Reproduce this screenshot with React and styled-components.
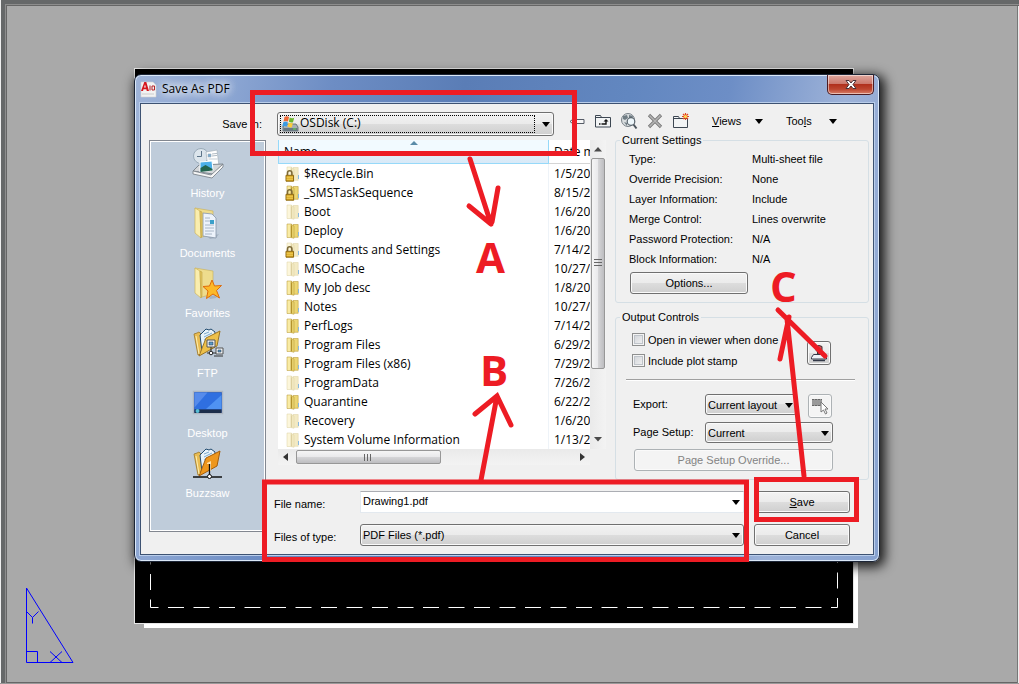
import React, { useState } from 'react'
import styled, { createGlobalStyle, css } from 'styled-components'

const GlobalStyle = createGlobalStyle`
  * {
    box-sizing: border-box;
  }
  body {
    margin: 0;
    background: #a9a9a9;
    color: #000;
    font: 11px/14px 'Liberation Sans', Arial, sans-serif;
  }
  button,
  input,
  select {
    margin: 0;
    font: inherit;
    color: inherit;
  }
`

const RED = '#ed1c24'

const Canvas = styled.main`
  position: relative;
  min-height: 100vh;
  padding: 74px 139px 60px 134px;
  overflow: hidden;
  background: linear-gradient(#000, #000) 114px 100% / 61px 1px no-repeat, #a9a9a9;
  border-bottom: 1px solid #999;
  box-shadow: inset 1px 0 #eee, inset 5px 4px #666869, inset 6px 5px #8d8d8d,
    inset 7px 6px #666, inset -1px 0 #eee, inset -2px 0 #777, inset 0 -1px #666;
`

const Sheet = styled.div`
  position: absolute;
  top: 69px;
  right: 166px;
  bottom: 60px;
  left: 135px;
  background: #000;
  box-shadow: 0 0 0 1px #e6e6e6, 7px 7px 0 -2px #fff;
`

const PlotMargin = styled.svg`
  position: absolute;
  left: 15px;
  bottom: 15px;
  width: calc(100% - 30px);
  height: 60px;
  overflow: visible;
`

const UcsIcon = styled.svg`
  position: absolute;
  left: 25px;
  bottom: 19px;
  width: 50px;
  height: 78px;
`

const Dialog = styled.section`
  position: relative;
  padding: 0 5px 6px;
  border: 1px solid #1c2536;
  border-radius: 7px;
  background: linear-gradient(100deg, #9fb4d8 0%, #8ba5d2 12%, #6d8dc4 24%, #5a7db6 40%, #6287c0 60%, #6d8ec6 72%, #9db2d8 86%, #87a2d0 100%);
  box-shadow: inset 0 0 0 1px #dbe8f7, 3px 3px 12px 2px rgba(0, 0, 0, 0.85);
`

const TitleBar = styled.header`
  display: flex;
  align-items: center;
  height: 28px;
  gap: 5px;
`

const Title = styled.h1`
  flex: 1;
  margin: 0;
  font: 12px/16px 'Open Sans', sans-serif;
  text-shadow: 0 0 8px #fff, 0 0 8px #fff, 0 0 12px #fff;
`

const CloseButton = styled.button`
  align-self: flex-start;
  display: flex;
  align-items: center;
  justify-content: center;
  width: 47px;
  height: 20px;
  padding: 0;
  border: 1px solid #4c1c22;
  border-top: 0;
  border-radius: 0 0 5px 5px;
  background: linear-gradient(#dfa79e, #cc7a6e 45%, #b0301d 50%, #bd4630 75%, #d98069);
  box-shadow: inset 0 0 0 1px rgba(255, 255, 255, 0.5);
`

const Client = styled.div`
  padding: 8px 4px 8px 8px;
  border: 1px solid #3d5272;
  background: #f0f0f0;
  box-shadow: 0 0 0 1px #b9cdea;
`

const LocationRow = styled.div`
  display: flex;
  align-items: center;
  margin-bottom: 4px;
`

const LocationLabel = styled.label`
  width: 128px;
  padding-right: 15px;
  text-align: right;
`

const raised = css`
  border: 1px solid #707070;
  border-radius: 3px;
  background: linear-gradient(#f2f2f2, #ebebeb 49%, #dddddd 50%, #cfcfcf);
  box-shadow: inset 0 0 0 1px #fafafa;
`

const Combo = styled.span`
  position: relative;
  display: flex;
  flex: ${props => (props.$width ? 'none' : 1)};
  width: ${props => (props.$width ? `${props.$width}px` : 'auto')};
  height: ${props => props.$height || 21}px;
  &::after {
    content: '';
    position: absolute;
    top: 50%;
    right: 4px;
    margin-top: -2px;
    border: 4px solid transparent;
    border-top: 5px solid #000;
    border-bottom: 0;
    pointer-events: none;
  }
`

const Select = styled.select`
  width: 100%;
  padding: 0 18px 0 2px;
  appearance: none;
  ${raised}
`

const DriveSelect = styled(Select)`
  padding-left: 22px;
  padding-bottom: 2px;
  font: 12px/16px 'Open Sans', sans-serif;
`

// focus rectangle and drive picture drawn over the select
const DriveFocus = styled.span`
  position: absolute;
  top: 3px;
  right: 19px;
  bottom: 3px;
  left: 3px;
  border: 1px dotted #000;
  pointer-events: none;
  svg {
    display: block;
  }
`

const Toolbar = styled.div`
  display: flex;
  align-items: center;
  flex: none;
  width: 315px;
  padding: 0 0 6px 15px;
  gap: 10px;
`

const ToolButton = styled.button`
  display: flex;
  width: 16px;
  height: 16px;
  padding: 0;
  border: 0;
  background: none;
  svg {
    flex: none;
  }
`

const MenuButton = styled.button`
  display: flex;
  align-items: center;
  justify-content: space-between;
  width: 51px;
  margin-left: 13px;
  padding: 0;
  border: 0;
  background: none;
  &::after {
    content: '';
    border: 4px solid transparent;
    border-top: 5px solid #000;
    border-bottom: 0;
  }
`

const Content = styled.div`
  display: flex;
  gap: 8px;
`

const Places = styled.nav`
  flex: none;
  width: 117px;
  margin-bottom: 14px;
  padding-top: 6px;
  border: 1px solid #828790;
  background: #bfccda;
  box-shadow: inset 0 0 0 1px #fff;
`

const Place = styled.button`
  display: flex;
  flex-direction: column;
  align-items: center;
  gap: 7px;
  width: 100%;
  height: 60px;
  padding: 0;
  border: 0;
  background: none;
  color: #fff;
`

const MainColumn = styled.div`
  flex: 1;
  min-width: 0;
`

const Upper = styled.div`
  display: flex;
  gap: 9px;
  padding-left: 4px;
`

const Browser = styled.div`
  flex: 1;
  min-width: 0;
  display: grid;
  grid-template-columns: minmax(0, 1fr) 16px;
  grid-template-rows: 309px 16px;
  align-content: start;
  background: #f0f0f0;
`

const FileTable = styled.table`
  width: 100%;
  table-layout: fixed;
  border-spacing: 0;
  background: #fff;
  font: 12px/19px 'Open Sans', sans-serif;
  td,
  th {
    padding: 0 0 0 5px;
    overflow: hidden;
    white-space: nowrap;
    text-align: left;
    font-weight: normal;
  }
  td:first-child {
    padding-left: 7px;
    border-right: 1px solid #eef3f8;
  }
`

const NameHeader = styled.th`
  position: relative;
  height: 24px;
  border: 1px solid #96d9f9;
  border-top: 0;
  background: linear-gradient(#f2faff, #f2faff 50%, #e4f1fa 51%, #d8e9f7);
  &::before {
    content: '';
    position: absolute;
    top: 1px;
    left: 50%;
    margin-left: -4px;
    border: 4px solid transparent;
    border-bottom: 4px solid #5b8ba8;
    border-top: 0;
  }
`

const DateHeader = styled.th`
  width: 41px;
  border-bottom: 1px solid #d5d5d5;
`

const FileName = styled.span`
  display: flex;
  align-items: center;
  gap: 3px;
`

const VScroll = styled.div`
  display: flex;
  flex-direction: column;
  align-items: center;
  padding: 7px 1px;
  background: linear-gradient(90deg, #eaeaea, #f3f3f3);
`

const HScroll = styled.div`
  display: flex;
  align-items: center;
  padding: 1px 5px;
  background: linear-gradient(#eaeaea, #f3f3f3);
`

const Thumb = styled.div`
  flex: none;
  display: flex;
  align-items: center;
  justify-content: center;
  width: ${props => (props.$vertical ? '14px' : '145px')};
  height: ${props => (props.$vertical ? '211px' : '14px')};
  margin: ${props => (props.$vertical ? '6px 0 auto' : '0 auto 0 8px')};
  border: 1px solid #979797;
  border-radius: 2px;
  background: linear-gradient(
    ${props => (props.$vertical ? '90deg' : '180deg')},
    #f5f5f5,
    #e9e9eb 49%,
    #d6d6d8 50%,
    #bdbdc0
  );
`

const Panel = styled.div`
  flex: none;
  width: 254px;
  margin-top: -7px;
`

const Group = styled.fieldset`
  min-width: 0;
  margin: 0 0 7px;
  padding: 0 0 8px;
  border: 1px solid #d5dfe5;
  border-radius: 3px;
  legend {
    margin-left: 4px;
    padding: 0 2px;
  }
`

const Settings = styled.dl`
  display: grid;
  grid-template-columns: 123px 1fr;
  margin: 2px 0 3px 13px;
  line-height: 20px;
  dd {
    margin: 0;
  }
`

const Button = styled.button`
  display: block;
  width: ${props => (props.$wide ? '199px' : '118px')};
  height: 22px;
  margin-left: ${props => (props.$wide ? '18px' : '14px')};
  padding: 0;
  ${raised}
  &:disabled {
    border-color: #adb2b5;
    background: #f4f4f4;
    color: #838383;
  }
`

const ActionButton = styled(Button)`
  width: 96px;
  margin: 0;
`

const SquareButton = styled.button`
  display: flex;
  align-items: center;
  justify-content: center;
  width: 24px;
  height: 24px;
  padding: 0;
  ${raised}
  &:disabled {
    border-color: #adb2b5;
    background: #f4f4f4;
  }
`

const Options = styled.div`
  display: flex;
  align-items: center;
  justify-content: space-between;
  margin: 5px 13px 7px 10px;
  padding: 0 24px 8px 6px;
  border-bottom: 1px solid #a0a0a0;
  box-shadow: 0 1px #fff;
  button {
    margin-top: 6px;
  }
`

const CheckLabel = styled.label`
  display: flex;
  align-items: center;
  gap: 3px;
  height: 21px;
`

const CheckBox = styled.input`
  appearance: none;
  width: 13px;
  height: 13px;
  border: 1px solid #8e8f8f;
  background: linear-gradient(135deg, #cdd0d5, #f6f6f6);
  box-shadow: inset 0 0 0 1px #f4f4f4, inset 0 0 0 2px #bfc4ca;
  &:checked {
    background: #4b6097;
  }
`

const ExportGrid = styled.div`
  display: grid;
  grid-template-columns: 72px 92px 35px;
  row-gap: 4px;
  margin: 14px 0 6px 17px;
  label {
    line-height: 21px;
  }
  > button {
    margin-left: 11px;
  }
`

const SetupRow = styled.div`
  display: flex;
  grid-column: 1 / -1;
  label {
    flex: none;
    width: 72px;
  }
`

const Footer = styled.div`
  display: grid;
  grid-template-columns: 86px 1fr 96px;
  align-items: center;
  row-gap: 11px;
  margin-top: 4px;
  padding-right: 19px;
  > label {
    padding-top: 4px;
  }
  > span {
    margin-right: 10px;
  }
`

const FileInput = styled.input`
  width: 100%;
  padding: 0 18px 2px 2px;
  border: 1px solid #e3e9ef;
  border-top-color: #abadb3;
  background: #fff;
`

const Markup = styled.svg`
  position: absolute;
  top: -1px;
  left: -1px;
  width: 746px;
  height: 490px;
  overflow: visible;
  pointer-events: none;
  fill: none;
  stroke: ${RED};
  stroke-width: 5px;
  stroke-linecap: round;
`

const Letter = styled.strong`
  position: absolute;
  left: ${props => props.$x}px;
  top: ${props => props.$y}px;
  color: ${RED};
  font: bold 42px/42px 'Open Sans', sans-serif;
  pointer-events: none;
`

const folderFill = { normal: ['#f9eba4', '#ecd673', '#b3932d'], faded: ['#fcf6db', '#f3eac4', '#ddd0a0'] }

function SmallFolder({ faded, locked }) {
  const [light, mid, dark] = folderFill[faded ? 'faded' : 'normal']
  return (
    <svg width="16" height="16" viewBox="0 0 16 16">
      <path d="M8 1.500h5.200v12.800H7z" fill={mid} stroke={dark} strokeWidth=".5" />
      <path d="M2 1h4.500v13.500H2z" fill={light} stroke={dark} strokeWidth=".5" />
      <path d="M6 1.500 9 3v12.300l-3-.8z" fill={mid} stroke={dark} strokeWidth=".5" />
      <path d="M6.500 2.500v11.600" stroke={dark} strokeWidth="1.200" />
      <path d="M13 9h1v4h-1z" fill="#8ab9e0" />
      {locked && (
        <g>
          <path d="M2.500 9.500V7a2.200 2.200 0 0 1 4.400 0v2.500" fill="none" stroke="#7d6a38" strokeWidth="1.600" />
          <path d="M1 9.300h7.500v5.900H1z" fill="#d9a51c" stroke="#8f6b14" />
          <path d="M1.500 11.200h6.500M1.500 13.200h6.500" stroke="#f8dd74" strokeWidth=".8" />
        </g>
      )}
    </svg>
  )
}

function OpenFolder({ orange, children }) {
  return (
    <svg width="32" height="32" viewBox="0 0 32 32">
      <path d="M2 7l3-1 2-1 3 3v19l-4 1z" fill="#e9bc53" stroke="#9b7526" strokeWidth=".8" />
      <path d="M8 8l6-6 3 1 2-1 4 3-1 11-12 9z" fill="#e8f3fa" stroke="#234c70" />
      <path d="M12 7l5-2M12 10l8-4M12 13l9-4" stroke="#7ba9cc" />
      <path d="M14 11l14-7-3 15L7 29z" fill={orange ? '#ee971d' : '#edc04a'} stroke={orange ? '#a45e0c' : '#9b7526'} />
      <path d="M4 9l3 18" stroke="#fff0b2" />
      {children}
    </svg>
  )
}

function PlainFolder({ children }) {
  return (
    <svg width="32" height="32" viewBox="0 0 32 32">
      <path d="M16 30l11-3-3 4-6 1z" fill="#8c9bab" opacity=".5" />
      <path d="M3 1l18 3v23l-11 3z" fill="#eedc8d" stroke="#c8ae55" strokeWidth=".6" />
      {children[0]}
      <path d="M3 1l5 3 1 27-6-5z" fill="#f9edae" stroke="#cfb45a" strokeWidth=".7" />
      <path d="M8 4l2 1v23l-1 3z" fill="#e3c864" stroke="#c2a23f" strokeWidth=".6" />
      {children[1]}
    </svg>
  )
}

const placeIcons = {
  History: (
    <svg width="32" height="32" viewBox="0 0 32 32">
      <circle cx="9" cy="9" r="7.500" fill="#dce5ec" stroke="#9aabb9" />
      <path d="M9.500 4v5.500H5" fill="none" stroke="#5d7489" />
      <path d="M14 5l11-2 2 16-11 2z" fill="#fff" stroke="#a5b1bb" strokeWidth=".7" />
      <path d="M16 7h3v3h-3zM16.500 12h9" fill="#79acd1" stroke="#9babb8" strokeWidth=".6" />
      <path d="M20 7l5-.6M20 9l5-.6" stroke="#8f9eaa" strokeWidth=".7" />
      <path d="M1 24l6-6 24-1-10 10z" fill="#d3d6d9" stroke="#7f8890" />
      <path d="M8 15l12-1 1 9-13 2z" fill="#4cb0ea" stroke="#fff" />
      <path d="M8.500 21l5-3 7 4v1.500L8.500 25z" fill="#24654f" />
      <path d="M1 24l18 4 12-11v3L20 31 1 27z" fill="#f6f6f6" stroke="#737b83" strokeWidth=".8" />
    </svg>
  ),
  Documents: (
    <PlainFolder>
      <g>
        <path d="M11 6l9 1 4 4v20l-13-2z" fill="#edf3fb" stroke="#8796a8" strokeWidth=".8" />
        <path d="M13 11h5M13 14h5M13 18h9M13 21h9M13 24h9M13 27h7" stroke="#97a6ba" strokeWidth=".8" />
        <path d="M18 13h4v4h-4z" fill="#3ba0ca" />
      </g>
      <g />
    </PlainFolder>
  ),
  Favorites: (
    <PlainFolder>
      <g />
      <path d="M20 13l2.500 6 7-.5-5 5 3 7.500-6.500-4-6.500 4.500 1.500-7.500-5-4.500 6.500-.5z" fill="#fcb928" stroke="#df6b0a" />
    </PlainFolder>
  ),
  FTP: (
    <OpenFolder>
      <path d="M15 13h8v7h-8zM24 21h7v6h-7z" fill="#eef2f5" stroke="#555" />
      <path d="M17 15h4v3h-4zM26 23h3v2h-3z" fill="#5b9bc7" stroke="#234" strokeWidth=".5" />
      <path d="M19 20v6h5M15 26h4M22 29h9" stroke="#333" fill="none" />
      <circle cx="19" cy="26" r="1.800" fill="#fff" stroke="#222" />
    </OpenFolder>
  ),
  Desktop: (
    <svg width="32" height="32" viewBox="0 0 32 32">
      <path d="M1.500 4.500h29v22h-29z" fill="#254e9d" stroke="#aeb6c2" strokeWidth="1.500" />
      <path d="M2.500 5.500h27v17h-27z" fill="#2f6fe0" />
      <path d="M2.500 5.500h13l-13 15z" fill="#568beb" />
      <path d="M29.500 8v14H14z" fill="#4f92f2" />
      <path d="M2.500 22.500h27v3.500h-27z" fill="#1c2e4b" />
      <circle cx="5.500" cy="24" r="2" fill="#57bed7" />
    </svg>
  ),
  Buzzsaw: (
    <OpenFolder orange>
      <path d="M15 16l4-2v10h-2v-7h-2z" fill="#ffe0a8" />
      <path d="M17.500 17v12M1 30h29" stroke="#111" strokeWidth="1.300" />
      <circle cx="17.500" cy="29.500" r="2" fill="#fff" stroke="#111" />
    </OpenFolder>
  ),
}

const files = [
  { name: '$Recycle.Bin', date: '1/5/20', locked: true, faded: true },
  { name: '_SMSTaskSequence', date: '8/15/2', locked: true },
  { name: 'Boot', date: '1/6/20', faded: true },
  { name: 'Deploy', date: '1/6/20' },
  { name: 'Documents and Settings', date: '7/14/2', locked: true, faded: true },
  { name: 'MSOCache', date: '10/27/', faded: true },
  { name: 'My Job desc', date: '1/8/20' },
  { name: 'Notes', date: '10/27/' },
  { name: 'PerfLogs', date: '7/14/2' },
  { name: 'Program Files', date: '6/29/2' },
  { name: 'Program Files (x86)', date: '7/29/2' },
  { name: 'ProgramData', date: '7/26/2', faded: true },
  { name: 'Quarantine', date: '6/22/2' },
  { name: 'Recovery', date: '1/6/20', faded: true },
  { name: 'System Volume Information', date: '1/13/2', faded: true },
]

const settings = [
  ['Type:', 'Multi-sheet file'],
  ['Override Precision:', 'None'],
  ['Layer Information:', 'Include'],
  ['Merge Control:', 'Lines overwrite'],
  ['Password Protection:', 'N/A'],
  ['Block Information:', 'N/A'],
]

function AppIcon() {
  return (
    <svg width="17" height="17" viewBox="0 0 17 17">
      <path d="M1 1h12l3 3v12H1z" fill="#f2f2f2" stroke="#d2d2d2" strokeWidth=".6" />
      <path d="M1 10L4.300 1h2L9 10H6.800l-.5-1.800H3.500L3 10zM4 6.500h1.900L5 3.500z" fill="#d5151c" />
      <path d="M10 4.500v5M12 5h2.500v4H12z" fill="none" stroke="#b31e24" />
      <path d="M2 13h12" stroke="#ccc" />
    </svg>
  )
}

function DriveIcon() {
  return (
    <svg width="18" height="17" viewBox="0 0 18 17">
      <path d="M2 10l3-2h10l2 3v4H2z" fill="#a5afb5" stroke="#566069" strokeWidth=".8" />
      <path d="M2.500 12h14v3h-14z" fill="#687780" />
      <path d="M12 13h3" stroke="#5de04e" />
      <path d="M3.500 1q3-1.500 4.500.2L7 5.500q-2.500-1.200-4.500 0z" fill="#ef6a38" />
      <path d="M8.700 1.500q2 1.300 4.500.2L12 6.200Q10 7 7.900 5.700z" fill="#6cb52c" />
      <path d="M2.300 6.200q2.500-1.200 4.500 0L5.800 10.500q-2.500-1.200-4.500 0z" fill="#3c9be2" />
      <path d="M7.600 6.500q2 1.300 4.300.5L10.800 11.300q-2.200.6-4.200-.7z" fill="#fbcb3c" />
    </svg>
  )
}

function Toolbox() {
  return (
    <Toolbar>
      <ToolButton aria-label="Back">
        <svg width="16" height="16" viewBox="0 0 16 16">
          <path d="M1 8.500l4-3.200v1.200h10v4H5v1.200z" fill="#f7f7f7" stroke="#555b66" />
        </svg>
      </ToolButton>
      <ToolButton aria-label="Up one level">
        <svg width="16" height="16" viewBox="0 0 16 16">
          <path d="M.5 2.500h5l1 2h9v9.500H.5z" fill="#f2f4f5" stroke="#3d4752" />
          <path d="M1 4.500h6" stroke="#3d4752" />
          <path d="M4 11h1.500M6.500 11H11V8" fill="none" stroke="#111" strokeWidth="1.400" />
          <path d="M8.500 8.500L11 6l2.500 2.500z" fill="#111" />
        </svg>
      </ToolButton>
      <ToolButton aria-label="Search the web">
        <svg width="17" height="17" viewBox="0 0 17 17">
          <circle cx="7" cy="7" r="6.500" fill="#d9dddf" stroke="#788087" />
          <path d="M2 3l4-1 1 3-3 2-2-1zM8 2l4 1-1 2H8zM3 9l3 1v3z" fill="#6f7c83" />
          <circle cx="10" cy="8.500" r="3.800" fill="#edf6fa" stroke="#59636c" strokeWidth="1.200" />
          <path d="M12.500 11.500l3 4" stroke="#4b545c" strokeWidth="2" />
        </svg>
      </ToolButton>
      <ToolButton aria-label="Delete">
        <svg width="16" height="16" viewBox="0 0 16 16">
          <path d="M2 2l12 12M14 2L2 14" stroke="#777" strokeWidth="3.200" />
          <path d="M2.500 2.500l11 11M13.500 2.500l-11 11" stroke="#b5b5b5" strokeWidth="1.600" />
        </svg>
      </ToolButton>
      <ToolButton aria-label="Create new folder">
        <svg width="17" height="17" viewBox="0 0 17 17">
          <path d="M.5 3.500h5l1 2h8v9H.5z" fill="#f2f4f5" stroke="#3d4752" />
          <path d="M1 5.500h6" stroke="#3d4752" />
          <path d="M12.500 0v7M9 3.500h7M10 1l5 5M15 1l-5 5" stroke="#e3461c" strokeWidth="1.200" />
          <circle cx="12.500" cy="3.500" r="1.600" fill="#ffdc52" />
        </svg>
      </ToolButton>
      <MenuButton>
        <span>
          <u>V</u>iews
        </span>
      </MenuButton>
      <MenuButton>
        <span>
          Too<u>l</u>s
        </span>
      </MenuButton>
    </Toolbar>
  )
}

function FileBrowser() {
  return (
    <Browser>
      <FileTable>
        <thead>
          <tr>
            <NameHeader>Name</NameHeader>
            <DateHeader>Date m</DateHeader>
          </tr>
        </thead>
        <tbody>
          {files.map(file => (
            <tr key={file.name}>
              <td>
                <FileName>
                  <SmallFolder faded={file.faded} locked={file.locked} />
                  {file.name}
                </FileName>
              </td>
              <td>{file.date}</td>
            </tr>
          ))}
        </tbody>
      </FileTable>
      <VScroll>
        <svg width="8" height="5">
          <path d="M0 4.500h8L4 0z" fill="#4b4b4b" />
        </svg>
        <Thumb $vertical>
          <svg width="8" height="9">
            <path d="M0 .5h8M0 3.500h8M0 6.500h8" stroke="#666" />
          </svg>
        </Thumb>
        <svg width="8" height="5">
          <path d="M0 0h8L4 4.500z" fill="#4b4b4b" />
        </svg>
      </VScroll>
      <HScroll>
        <svg width="5" height="8">
          <path d="M5 0v8L0 4z" fill="#333" />
        </svg>
        <Thumb>
          <svg width="9" height="7">
            <path d="M.5 0v7M3.500 0v7M6.500 0v7" stroke="#666" />
          </svg>
        </Thumb>
        <svg width="5" height="8">
          <path d="M0 0v8l5-4z" fill="#333" />
        </svg>
      </HScroll>
    </Browser>
  )
}

function SettingsPanel() {
  return (
    <Panel>
      <Group>
        <legend>Current Settings</legend>
        <Settings>
          {settings.map(([label, value]) => (
            <React.Fragment key={label}>
              <dt>{label}</dt>
              <dd>{value}</dd>
            </React.Fragment>
          ))}
        </Settings>
        <Button>Options...</Button>
      </Group>
      <Group>
        <legend>Output Controls</legend>
        <Options>
          <div>
            <CheckLabel>
              <CheckBox type="checkbox" />
              Open in viewer when done
            </CheckLabel>
            <CheckLabel>
              <CheckBox type="checkbox" />
              Include plot stamp
            </CheckLabel>
          </div>
          <SquareButton aria-label="Plot stamp settings">
            <svg width="18" height="18" viewBox="0 0 18 18">
              <path d="M6 2.500q3-2 6 0v4l-1.500 1v2.500h-3V7.500L6 6.500z" fill="#d6545b" stroke="#3d3030" />
              <path d="M3.500 10.500h11l2 3v1.500h-15v-1.500z" fill="#eef1f6" stroke="#333948" />
              <path d="M3 16.500h12" stroke="#333948" strokeWidth="1.500" />
            </svg>
          </SquareButton>
        </Options>
        <ExportGrid>
          <label htmlFor="export">Export:</label>
          <Combo $width={92}>
            <Select id="export">
              <option>Current layout</option>
            </Select>
          </Combo>
          <SquareButton disabled aria-label="Pick window">
            <svg width="18" height="18" viewBox="0 0 18 18">
              <path d="M1 2h10v7H1z" fill="#999" />
              <path d="M1 2.500h10M1 8.500h10" stroke="#666" strokeDasharray="2 1" />
              <path d="M10 5v10l2.500-2 2 4 1.500-1-2-4h3z" fill="#fff" stroke="#777" />
            </svg>
          </SquareButton>
          <SetupRow>
            <label htmlFor="setup">Page Setup:</label>
            <Combo $width={128}>
              <Select id="setup">
                <option>Current</option>
              </Select>
            </Combo>
          </SetupRow>
        </ExportGrid>
        <Button $wide disabled>
          Page Setup Override...
        </Button>
      </Group>
    </Panel>
  )
}

function Annotations() {
  return (
    <>
      <Markup viewBox="134 74 746 490">
        <g strokeLinecap="butt">
          <path d="M252.500 92.500h322v61h-322z" />
          <path d="M264.500 482h482v77.500h-482z" />
          <path d="M756.500 479.500h100v40h-100z" />
        </g>
        <path d="M470 159l21 65M469 206l22 18M498 188l-6 34" />
        <path d="M481 480l16-84M475 414l22-18 14 29" />
        <path d="M804 476L787 319M780 359l9-42M778 310l47 46" />
      </Markup>
      <Letter $x={341} $y={161}>A</Letter>
      <Letter $x={345} $y={274}>B</Letter>
      <Letter $x={635} $y={190}>C</Letter>
    </>
  )
}

export default function App() {
  const [fileName, setFileName] = useState('Drawing1.pdf')

  return (
    <Canvas>
      <GlobalStyle />
      <Sheet>
        <PlotMargin viewBox="0 0 688 60" preserveAspectRatio="none">
          <path
            d="M.5 59.500V0M.5 59.500H687.500V0"
            fill="none"
            stroke="#fff"
            strokeDasharray="16 9.500"
            strokeDashoffset="8"
          />
        </PlotMargin>
      </Sheet>
      <UcsIcon viewBox="0 0 50 78" fill="none" stroke="#00f">
        <path d="M1.500 2v74.500H48zM1.500 65.500h11v11M1.500 25.500l6 6 6-6M7.500 31.500v6M25 65.500l12 11M37 65.500l-12 11" />
      </UcsIcon>
      <Dialog>
        <TitleBar>
          <AppIcon />
          <Title>Save As PDF</Title>
          <CloseButton aria-label="Close">
            <svg width="14" height="11" viewBox="0 0 14 11">
              <path d="M2 1.500h3L7 4l2-2.500h3L9 5.500l3 4H9L7 7 5 9.500H2l3-4z" fill="#fff" stroke="#4b3238" />
            </svg>
          </CloseButton>
        </TitleBar>
        <Client>
          <LocationRow>
            <LocationLabel htmlFor="location">Save in:</LocationLabel>
            <Combo $height={24}>
              <DriveSelect id="location">
                <option>OSDisk (C:)</option>
              </DriveSelect>
              <DriveFocus>
                <DriveIcon />
              </DriveFocus>
            </Combo>
            <Toolbox />
          </LocationRow>
          <Content>
            <Places>
              {Object.keys(placeIcons).map(name => (
                <Place key={name}>
                  {placeIcons[name]}
                  {name}
                </Place>
              ))}
            </Places>
            <MainColumn>
              <Upper>
                <FileBrowser />
                <SettingsPanel />
              </Upper>
              <Footer>
                <label htmlFor="filename">File name:</label>
                <Combo $height={22}>
                  <FileInput
                    id="filename"
                    type="text"
                    value={fileName}
                    onChange={event => setFileName(event.target.value)}
                  />
                </Combo>
                <ActionButton>
                  <u>S</u>ave
                </ActionButton>
                <label htmlFor="filetype">Files of type:</label>
                <Combo $height={22}>
                  <Select id="filetype">
                    <option>PDF Files (*.pdf)</option>
                  </Select>
                </Combo>
                <ActionButton>Cancel</ActionButton>
              </Footer>
            </MainColumn>
          </Content>
        </Client>
        <Annotations />
      </Dialog>
    </Canvas>
  )
}
